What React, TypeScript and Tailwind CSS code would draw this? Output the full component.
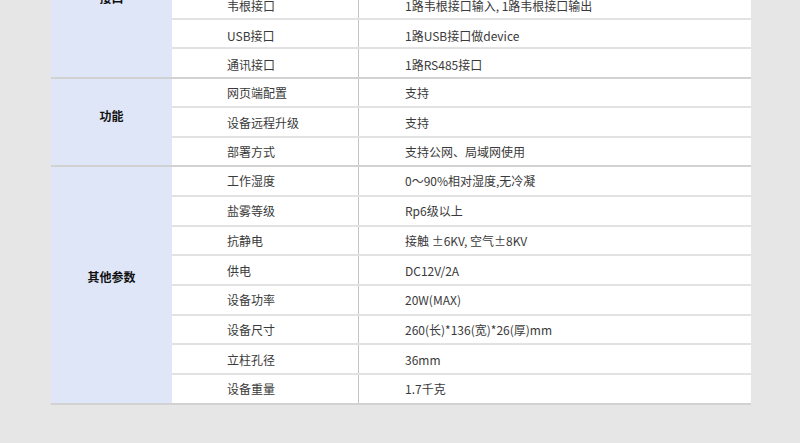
import React from "react";

type Group = { label: string; rowH: string; lastH: string; labelPad: string; cellPad: string; rows: [string, string][] };

const groups: Group[] = [
  {
    label: "接口",
    rowH: "h-[29.6px]",
    lastH: "h-[27.6px]",
    labelPad: "pb-[12px]",
    cellPad: "pt-[4px]",
    rows: [
      ["网络接口", "1路RJ45网口"],
      ["报警接口", "1路报警输入, 1路报警输出"],
      ["韦根接口", "1路韦根接口输入, 1路韦根接口输出"],
      ["USB接口", "1路USB接口做device"],
      ["通讯接口", "1路RS485接口"],
    ],
  },
  {
    label: "功能",
    rowH: "h-[29.4px]",
    lastH: "h-[27.4px]",
    labelPad: "pb-[12px]",
    cellPad: "pt-[1px]",
    rows: [
      ["网页端配置", "支持"],
      ["设备远程升级", "支持"],
      ["部署方式", "支持公网、局域网使用"],
    ],
  },
  {
    label: "其他参数",
    rowH: "h-[29.7px]",
    lastH: "h-[27.7px]",
    labelPad: "pb-[16px]",
    cellPad: "pt-[1px]",
    rows: [
      ["工作湿度", "0～90%相对湿度,无冷凝"],
      ["盐雾等级", "Rp6级以上"],
      ["抗静电", "接触 ±6KV, 空气±8KV"],
      ["供电", "DC12V/2A"],
      ["设备功率", "20W(MAX)"],
      ["设备尺寸", "260(长)*136(宽)*26(厚)mm"],
      ["立柱孔径", "36mm"],
      ["设备重量", "1.7千克"],
    ],
  },
];

export default function App() {
  return (
    <div
      className="w-[800px] h-[443px] overflow-hidden bg-[#e6e6e6]"
      style={{ fontFamily: '"Noto Sans CJK SC", "Noto Sans", sans-serif' }}
    >
      <div className="ml-[51px] w-[700px] mt-[-69px] flex flex-col">
        {groups.map((g) => (
          <div key={g.label} className="flex border-b-2 border-[#d2d2d2]">
            <div
              className={`w-[121px] shrink-0 bg-[#dfe6f7] flex items-center justify-center text-[12px] font-bold text-[#111] ${g.labelPad}`}
            >
              {g.label}
            </div>
            <div className="flex-1 flex flex-col bg-white">
              {g.rows.map(([k, v], i) => (
                <div
                  key={k}
                  className={
                    i < g.rows.length - 1
                      ? `flex border-b-2 border-[#e2e2e2] ${g.rowH}`
                      : `flex ${g.lastH}`
                  }
                >
                  <div className={`w-[186px] shrink-0 pl-[55px] flex items-center text-[12px] text-[#3a3a3a] ${g.cellPad}`}>
                    {k}
                  </div>
                  <div className={`flex-1 border-l border-[#c4c4c4] pl-[46px] flex items-center text-[12px] text-[#3a3a3a] ${g.cellPad}`}>
                    {v}
                  </div>
                </div>
              ))}
            </div>
          </div>
        ))}
      </div>
    </div>
  );
}
